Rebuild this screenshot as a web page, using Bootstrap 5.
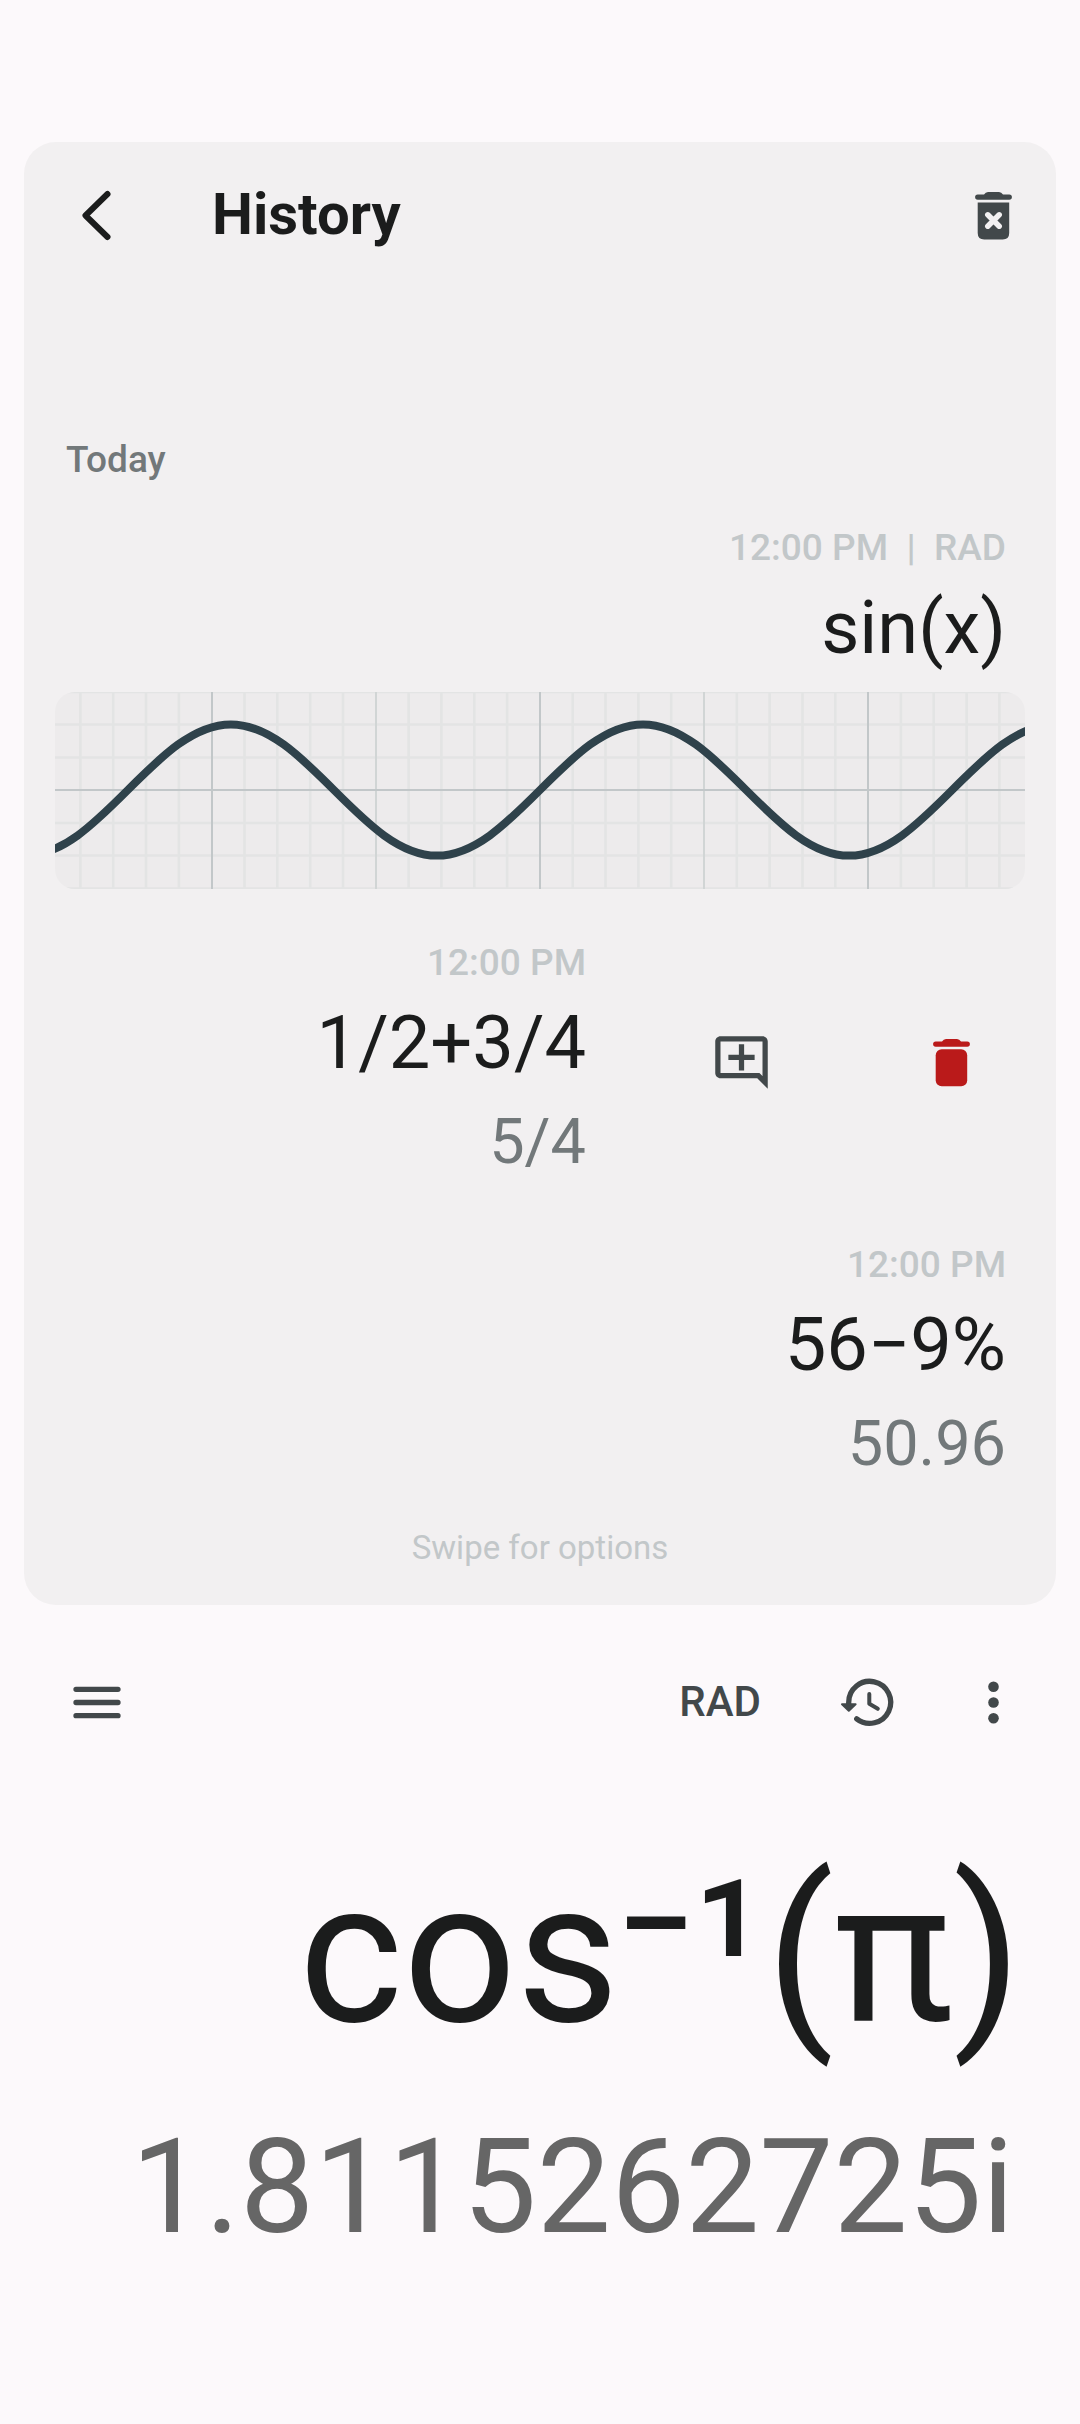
<!DOCTYPE html>
<html lang="en">
<head>
<meta charset="utf-8">
<meta name="viewport" content="width=device-width, initial-scale=1">
<title>Calculator</title>
<link href="https://cdn.jsdelivr.net/npm/bootstrap@5.3.0/dist/css/bootstrap.min.css" rel="stylesheet">
<style>
  body { background: #fcf9fb; color: #1b1c1c; font-family: Roboto, "Noto Sans", sans-serif; }
  .app-shell { padding-top: 142px; }
  .history-panel { margin: 0 24px; padding-bottom: 33px; border-radius: 32px; background: #f2f0f1; }
  .panel-head { height: 147px; padding: 0 31px 0 39px; }
  .panel-title { margin-left: 86px; padding-bottom: 4px; font-size: 58px; line-height: 68px; font-weight: 700; }
  .icon-btn { width: 63px; height: 63px; padding: 0; border: 0; color: #42484a; }
  .icon-btn svg { display: block; width: 63px; height: 63px; }
  .icon-btn.ink { color: #1b1c1c; }
  .icon-btn.danger { color: #ba1a1a; }
  .day-label { margin: 144px 0 10px 42px; font-size: 37px; line-height: 54px; font-weight: 500; color: #72787a; }
  .entry { padding: 24px 0 26px; }
  .entry-text { padding-right: 50px; text-align: right; }
  .entry-time { font-size: 37px; line-height: 54px; font-weight: 500; color: #c2c7c9; white-space: pre; }
  .entry-expr { font-size: 74px; line-height: 106px; }
  .entry-result { font-size: 63px; line-height: 92px; color: #72787a; }
  .entry-graph { padding-bottom: 23px; }
  .graph { margin: 11px 31px 0; border-radius: 20px; overflow: hidden; background: #edebec; }
  .graph svg { display: block; width: 100%; height: auto; }
  .swipe-action { width: 210px; }
  .hint { margin-top: 8px; font-size: 33px; line-height: 48px; color: #c2c7c9; }
  .toolbar { height: 147px; margin-top: 24px; padding: 0 55px 0 65px; }
  .mode-btn { margin-right: 10px; padding: 0 0 2px; border: 0; font-size: 42px; line-height: 56px; font-weight: 500; color: #42484a; }
  .tools-right { gap: 64px; }
  .display { padding: 52px 0 0 24px; text-align: right; }
  .formula { padding-right: 58px; font-size: 199px; line-height: 250px; white-space: nowrap; }
  .preview { margin-top: 29px; padding-right: 66px; font-size: 132px; line-height: 160px; color: #666; }
</style>
</head>
<body>
<main class="app-shell">
  <section class="history-panel" aria-label="History">
    <header class="panel-head d-flex align-items-center">
      <button class="btn icon-btn ink" type="button" aria-label="Back">
        <svg viewBox="0 0 63 63" fill="none" stroke="currentColor" stroke-width="6" stroke-linecap="round" stroke-linejoin="round"><path d="M44.5 10 22.5 31.5 44.5 53"/></svg>
      </button>
      <h1 class="panel-title mb-0">History</h1>
      <button class="btn icon-btn ms-auto" type="button" aria-label="Clear history">
        <svg viewBox="0 0 63 63" fill="currentColor"><path d="M22 10.500q1.500-2.500 4-2.500h11q2.500 0 4 2.500h6.300a2.600 2.600 0 0 1 0 5.200H15.700a2.600 2.600 0 0 1 0-5.200z"/><path d="M15.700 18.500h31.500V49q0 6.500-6.500 6.500H22.200q-6.500 0-6.500-6.500z"/><path d="m25.800 31.500 11.400 11.400m0-11.400L25.800 42.900" transform="translate(0 -.7)" stroke="#f2f0f1" stroke-width="5.500" stroke-linecap="round"/></svg>
      </button>
    </header>

    <h2 class="day-label">Today</h2>

    <article class="entry entry-graph">
      <div class="entry-text">
        <div class="entry-time">12:00 PM  |  RAD</div>
        <div class="entry-expr">sin(x)</div>
      </div>
      <div class="graph">
        <svg viewBox="0 0 970 197" role="img" aria-label="Graph of sin(x)">
          <g fill="none">
            <path stroke="#e3e4e4" stroke-width="2.600" d="M25.400 0v197M58.200 0v197M91 0v197M123.900 0v197M189.500 0v197M222.300 0v197M255.200 0v197M288 0v197M353.600 0v197M386.400 0v197M419.300 0v197M452.100 0v197M517.700 0v197M550.500 0v197M583.400 0v197M616.200 0v197M681.800 0v197M714.600 0v197M747.500 0v197M780.300 0v197M845.900 0v197M878.700 0v197M911.600 0v197M944.400 0v197M0 0h970M0 32.500h970M0 65.500h970M0 131h970M0 163.500h970M0 196.500h970"/>
            <path stroke="#d1d5d5" stroke-width="2" d="M321 0v197M649 0v197"/>
            <path stroke="#c2c7c9" stroke-width="2" d="M157 0v197M485 0v197M813 0v197M0 98h970"/>
            <path stroke="#2f424b" stroke-width="8" d="M-30.200 163.600c37.290 0 69.440-32 103.040-65.600c33.600-33.600 65.750-65.600 103.040-65.600c37.290 0 69.440 32 103.040 65.600c33.600 33.600 65.750 65.600 103.040 65.600c37.290 0 69.440-32 103.040-65.600c33.600-33.600 65.750-65.600 103.040-65.600c37.290 0 69.440 32 103.040 65.600c33.600 33.600 65.750 65.600 103.040 65.600c37.290 0 69.440-32 103.040-65.600c33.600-33.600 65.750-65.600 103.040-65.600"/>
          </g>
        </svg>
      </div>
    </article>

    <article class="entry d-flex align-items-center">
      <div class="entry-text flex-grow-1">
        <div class="entry-time">12:00 PM</div>
        <div class="entry-expr">1/2+3/4</div>
        <div class="entry-result">5/4</div>
      </div>
      <div class="swipe-action d-flex justify-content-center">
        <button class="btn icon-btn" type="button" aria-label="Add note">
          <svg viewBox="0 0 24 24" fill="currentColor"><path d="M22 4c0-1.100-.9-2-2-2H4c-1.100 0-2 .9-2 2v12c0 1.100.9 2 2 2h14l4 4V4zm-2 13.170L18.830 16H4V4h16v13.170zM13 5h-2v4H7v2h4v4h2v-4h4V9h-4z"/></svg>
        </button>
      </div>
      <div class="swipe-action d-flex justify-content-center">
        <button class="btn icon-btn danger" type="button" aria-label="Delete entry">
          <svg viewBox="0 0 63 63" fill="currentColor"><path d="M22 10.500q1.500-2.500 4-2.500h11q2.500 0 4 2.500h6.300a2.600 2.600 0 0 1 0 5.200H15.700a2.600 2.600 0 0 1 0-5.200z"/><rect x="15.700" y="18.300" width="31.500" height="37" rx="6"/></svg>
        </button>
      </div>
    </article>

    <article class="entry">
      <div class="entry-text">
        <div class="entry-time">12:00 PM</div>
        <div class="entry-expr">56−9%</div>
        <div class="entry-result">50.96</div>
      </div>
    </article>

    <p class="hint mb-0 text-center">Swipe for options</p>
  </section>

  <nav class="toolbar d-flex align-items-center justify-content-between" aria-label="Calculator tools">
    <button class="btn icon-btn" type="button" aria-label="Menu">
      <svg viewBox="0 0 63 63" stroke="currentColor" stroke-width="5.300" stroke-linecap="round"><path d="M11 18.300h42M11 31.500h42M11 44.700h42"/></svg>
    </button>
    <div class="tools-right d-flex align-items-center">
      <button class="btn mode-btn" type="button">RAD</button>
      <button class="btn icon-btn" type="button" aria-label="History">
        <svg viewBox="0 0 63 63" fill="none" stroke="currentColor" stroke-width="5.300" stroke-linecap="round" stroke-linejoin="round"><path d="M13.700 33v-1.500a21 21 0 1 1 8 16.300"/><path d="M7 33.200h13.600l-6.800 6.600z" fill="currentColor" stroke-width="2"/><path d="M34.300 23v9.800l8.500 5" stroke-width="4"/></svg>
      </button>
      <button class="btn icon-btn" type="button" aria-label="More options">
        <svg viewBox="0 0 63 63" fill="currentColor"><circle cx="31.500" cy="15.700" r="5.300"/><circle cx="31.500" cy="31.500" r="5.300"/><circle cx="31.500" cy="47.300" r="5.300"/></svg>
      </button>
    </div>
  </nav>

  <section class="display" aria-label="Display">
    <div class="formula">cos⁻¹(π)</div>
    <div class="preview">1.8115262725i</div>
  </section>
</main>
<script src="https://cdn.jsdelivr.net/npm/bootstrap@5.3.0/dist/js/bootstrap.bundle.min.js"></script>
</body>
</html>
